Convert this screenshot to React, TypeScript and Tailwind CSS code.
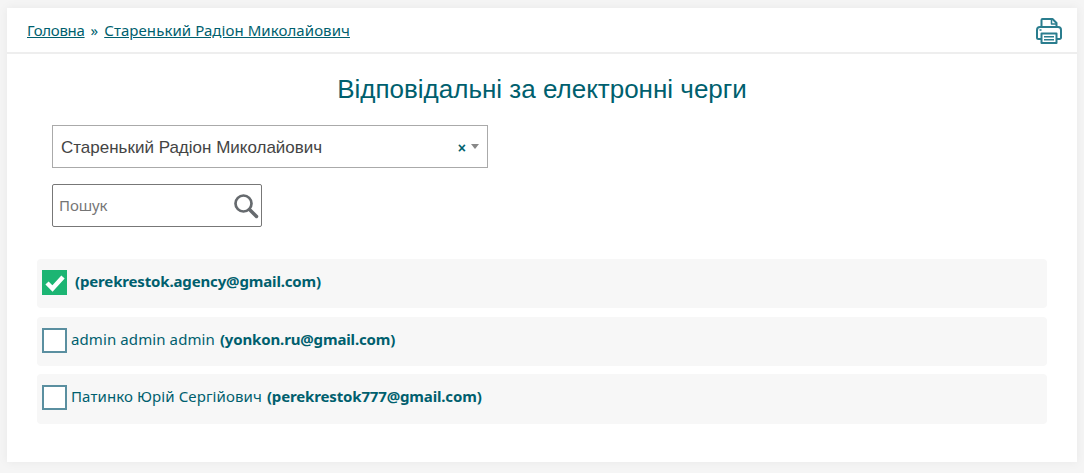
import React from 'react';

const users = [
  { name: '', email: '(perekrestok.agency@gmail.com)', checked: true },
  { name: 'admin admin admin', email: '(yonkon.ru@gmail.com)', checked: false },
  { name: 'Патинко Юрій Сергійович', email: '(perekrestok777@gmail.com)', checked: false },
];

const PrintIcon = () => (
  <svg className="mt-[2px]" width="26" height="26" viewBox="0 0 26 26" fill="none" stroke="#2a7d8e" strokeWidth="2" strokeLinejoin="round">
    <path d="M5.500 10V2a1 1 0 0 1 1-1h10l4 4v5" />
    <path d="M15.500 1v5h5" strokeWidth="1.500" />
    <path d="M5 21H2.500A1.500 1.500 0 0 1 1 19.500V12a3 3 0 0 1 3-3h18a3 3 0 0 1 3 3v7.500a1.500 1.500 0 0 1-1.500 1.500H21" />
    <path d="M5.500 15.500h15V25h-15z" />
    <path d="M8 18.800h10M8 21.800h10" strokeWidth="1.600" />
    <path d="M3.500 12h2" strokeWidth="1.500" />
  </svg>
);

const App: React.FC = () => {
  return (
    <div className="h-[473px] bg-[#f5f5f5] pt-2 px-[7px] overflow-hidden font-['Noto_Sans',sans-serif]">
      <div className="h-[454px] bg-white shadow-[0_0_10px_rgba(0,0,0,0.06)]">
        <div className="h-[46px] border-b-2 border-[#eeeeee] flex items-center justify-between pl-5 pr-[15px]">
          <div className="text-[15px] text-[#005f6e] flex items-center">
            <a className="underline tracking-[-0.3px]">Головна</a>
            <span className="mx-[6px]">»</span>
            <a className="underline tracking-[0.07px]">Старенький Радіон Миколайович</a>
          </div>
          <PrintIcon />
        </div>
        <h1 className="mt-[20px] text-center text-[26px] leading-[30px] text-[#005f6e] font-['Liberation_Sans',sans-serif]">
          Відповідальні за електронні черги
        </h1>
        <div className="ml-[45px] mt-[21px] w-[436px] h-[43px] border border-[#aaaaaa] flex items-center pl-2 pr-2 font-['Liberation_Sans',sans-serif]">
          <span className="flex-1 text-[17px] mt-[3px] text-[#444444]">Старенький Радіон Миколайович</span>
          <span className="text-[#005f6e] text-sm font-bold mr-[5px] mt-[2px]">×</span>
          <span className="w-0 h-0 border-x-[4px] border-x-transparent border-t-[5px] border-t-[#888888]" />
        </div>
        <div className="ml-[45px] mt-4 w-[210px] h-[43px] border border-[#777777] rounded-[2px] flex items-center justify-between pl-[6px] pr-[2px]">
          <span className="text-[15px] tracking-[-0.1px] text-[#757575]">Пошук</span>
          <svg width="26" height="26" viewBox="0 0 26 26" fill="none" stroke="#666a6e">
            <circle cx="10.500" cy="10.500" r="8" strokeWidth="2.700" />
            <path d="M16.500 16.500l7 7" strokeWidth="3.500" strokeLinecap="round" />
          </svg>
        </div>
        <div className="mt-[32px] mx-[30px] flex flex-col gap-[8.2px]">
          {users.map((u) => (
            <div key={u.email} className="h-[49.4px] pb-[2px] bg-[#f7f7f7] rounded-[4px] flex items-center pl-[5px] text-[15px] text-[#005f6e]">
              {u.checked ? (
                <span className="w-[25px] h-[25px] bg-[#1cb573] flex items-center justify-center mr-2">
                  <svg width="20" height="18" viewBox="0 0 20 18" fill="none" stroke="white" strokeWidth="4.500">
                    <path d="M2 9l5.500 5.500L18 3" />
                  </svg>
                </span>
              ) : (
                <span className="w-[25px] h-[25px] bg-white border-2 border-[#5a8fa0] mr-[4px]" />
              )}
              <span className="mb-[2.500px] tracking-[0.1px]">
                {u.name && <span className="mr-[5px]">{u.name}</span>}
                <b className="font-bold tracking-[-0.15px]">{u.email}</b>
              </span>
            </div>
          ))}
        </div>
      </div>
    </div>
  );
};

export default App;
